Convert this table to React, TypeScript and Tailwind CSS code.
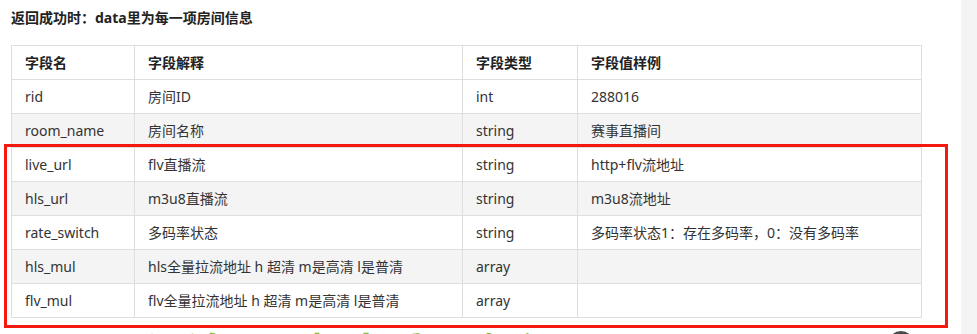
const rows = [
  { name: "rid", desc: "房间ID", type: "int", sample: "288016" },
  { name: "room_name", desc: "房间名称", type: "string", sample: "赛事直播间" },
  { name: "live_url", desc: "flv直播流", type: "string", sample: "http+flv流地址" },
  { name: "hls_url", desc: "m3u8直播流", type: "string", sample: "m3u8流地址" },
  {
    name: "rate_switch",
    desc: "多码率状态",
    type: "string",
    sample: "多码率状态1：存在多码率，0：没有多码率",
  },
  { name: "hls_mul", desc: "hls全量拉流地址 h 超清 m是高清 l是普清", type: "array", sample: "" },
  { name: "flv_mul", desc: "flv全量拉流地址 h 超清 m是高清 l是普清", type: "array", sample: "" },
];

const cell = "h-[34px] border border-[#dedede] px-[13px] py-0 align-middle";

const App = () => {
  return (
    <div className="flex h-[334px] w-[977px] overflow-hidden bg-white font-['Noto_Sans','Noto_Sans_CJK_SC',sans-serif] text-[#333]">
      <div className="relative flex-1">
        <div className="pl-[11px] pt-[8px]">
          <h3 className="text-[14px] font-bold leading-5 text-[#222]">
            返回成功时：data里为每一项房间信息
          </h3>

          <table className="mt-[17px] w-[910px] table-fixed border-collapse text-[14px]">
            <colgroup>
              <col className="w-[123px]" />
              <col className="w-[328px]" />
              <col className="w-[115px]" />
              <col className="w-[344px]" />
            </colgroup>
            <thead>
              <tr className="bg-white font-bold text-[#222]">
                <td className={cell}>字段名</td>
                <td className={cell}>字段解释</td>
                <td className={cell}>字段类型</td>
                <td className={cell}>字段值样例</td>
              </tr>
            </thead>
            <tbody>
              {rows.map((row, i) => (
                <tr key={row.name} className={i % 2 === 1 ? "bg-[#f4f4f4]" : "bg-white"}>
                  <td className={cell}>{row.name}</td>
                  <td className={cell}>{row.desc}</td>
                  <td className={cell}>{row.type}</td>
                  <td className={cell}>{row.sample}</td>
                </tr>
              ))}
            </tbody>
          </table>

          <div className="mt-[14px] flex gap-[40px] pl-[135px] text-[40px] font-bold leading-none text-[#8ab83a]">
            <span>评论</span>
            <span>一起来看</span>
            <span>欢迎</span>
          </div>
        </div>

        {/* annotation */}
        <div className="absolute left-[4px] top-[144px] h-[184px] w-[944px] border-[3px] border-[#f3190f]" />
        <div className="absolute left-[888px] top-[331px] h-[26px] w-[26px] rounded-full bg-[#4a4a4a]" />
      </div>
      <div className="w-[16px] bg-[#f4f4f4]" />
    </div>
  );
};

export default App;
